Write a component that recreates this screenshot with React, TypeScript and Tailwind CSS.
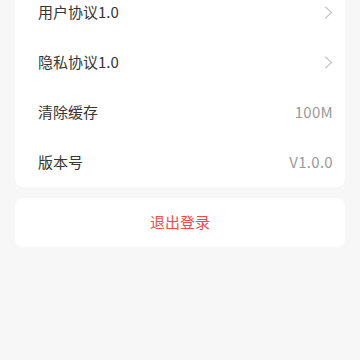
import React from 'react';

const ChevronRight = () => (
  <svg width="9" height="13" viewBox="0 0 9 13" fill="none" className="shrink-0">
    <path d="M1.5 1l6 5.5-6 5.5" stroke="#c4c4c4" strokeWidth="1.1" strokeLinecap="round" strokeLinejoin="round" />
  </svg>
);

interface RowProps {
  label: string;
  value?: string;
  arrow?: boolean;
}

const Row = ({ label, value, arrow }: RowProps) => (
  <div className="flex h-[50px] items-center justify-between pl-[23px] pr-[12px]">
    <span className="text-[15px] text-[#363636]">{label}</span>
    {arrow ? <ChevronRight /> : <span className="text-[15px] tracking-[0.3px] text-[#9a9a9a]">{value}</span>}
  </div>
);

export default function App() {
  return (
    <div
      className="h-[360px] w-[360px] overflow-hidden bg-[#f7f7f7] px-[15px]"
      style={{ fontFamily: '"Noto Sans CJK SC", "Noto Sans", sans-serif' }}
    >
      <div className="-mt-[13px] rounded-[8px] bg-white">
        <Row label="用户协议1.0" arrow />
        <Row label="隐私协议1.0" arrow />
        <Row label="清除缓存" value="100M" />
        <Row label="版本号" value="V1.0.0" />
      </div>
      <div className="mt-[11px] flex h-[49px] items-center justify-center rounded-[8px] bg-white">
        <span className="text-[15px] text-[#f24b4b]">退出登录</span>
      </div>
    </div>
  );
}
